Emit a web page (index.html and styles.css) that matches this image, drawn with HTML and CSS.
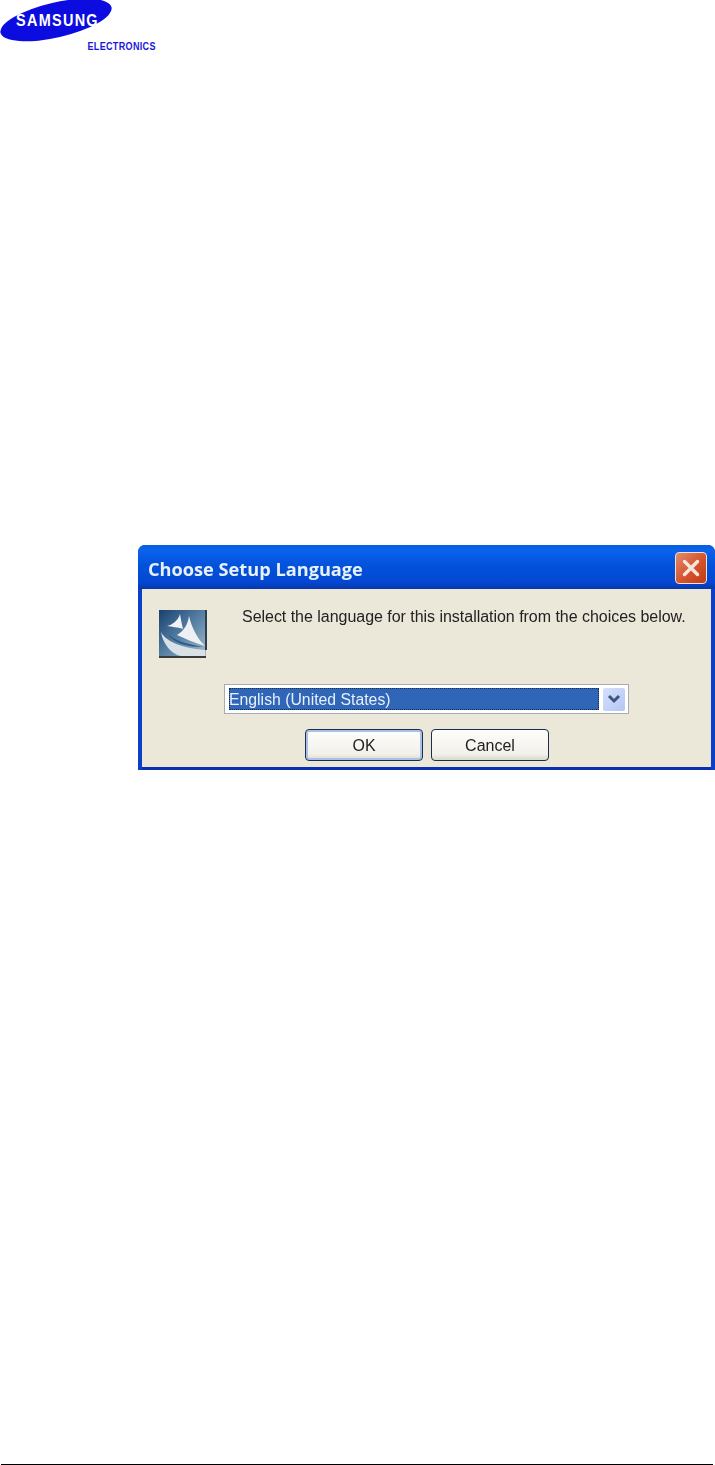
FILE: index.html
```html
<!DOCTYPE html>
<html lang="en">
<head>
    <meta charset="UTF-8">
    <meta name="viewport" content="width=device-width, initial-scale=1.0">
    <title>Choose Setup Language</title>
    <link rel="stylesheet" href="styles.css">
</head>
<body>
    <div class="page">
        <svg class="logo" width="160" height="52" viewBox="0 0 160 52">
            <ellipse cx="56" cy="20" rx="57" ry="17.5" fill="#0c0ce0" transform="rotate(-13 56 20)"/>
            <text class="logo-name" transform="translate(16 25.500) scale(.85 1)" textLength="96">SAMSUNG</text>
            <text class="logo-sub" transform="translate(87.500 49.500) scale(.86 1)" textLength="79">ELECTRONICS</text>
        </svg>

        <div class="dialog">
            <div class="titlebar">
                <span class="title">Choose Setup Language</span>
                <div class="close">
                    <svg width="20" height="20" viewBox="0 0 20 20">
                        <path d="M3.500 3.500 L16.500 16.500 M16.500 3.500 L3.500 16.500" stroke="#f4e6dc" stroke-width="3.500" stroke-linecap="round"/>
                    </svg>
                </div>
            </div>
            <div class="content">
                <div class="intro">
                    <svg class="setup-icon" width="49" height="49" viewBox="0 0 49 49">
                        <defs>
                            <linearGradient id="iconbg" x1="0" y1="0" x2="1" y2="1">
                                <stop offset="0" stop-color="#17406f"/>
                                <stop offset="0.55" stop-color="#5c86a8"/>
                                <stop offset="1" stop-color="#a9bccb"/>
                            </linearGradient>
                        </defs>
                        <rect width="47" height="47" fill="url(#iconbg)"/>
                        <rect y="46" width="47" height="2" fill="#3a3a3a"/>
                        <rect x="46" y="0" width="2" height="40" fill="#2c3e50"/>
                        <path d="M8 16 C13 15 19 11 21 4 C22 10 23 15 24 19 C18 17 13 17 8 16 Z" fill="#eef2f4"/>
                        <path d="M18 25 C25 21 29 14 30 6 C33 18 38 28 46 36 C36 33 27 29 18 25 Z" fill="#eef1f3"/>
                        <path d="M2 22 C6 30 20 38 46 40 L46 46 L22 46 C12 44 4 34 2 22 Z" fill="#d9e1e6"/>
                        <path d="M9 24 C15 30 27 34 44 37 C30 37 15 34 9 24 Z" fill="#2b5a86"/>
                    </svg>
                    <p class="message">Select the language for this installation from the choices below.</p>
                </div>
                <div class="select">
                    <div class="selected">English (United States)</div>
                    <div class="arrow">
                        <svg width="14" height="10" viewBox="0 0 14 10">
                            <path d="M2 2 L7 7 L12 2" fill="none" stroke="#3a5680" stroke-width="3"/>
                        </svg>
                    </div>
                </div>
                <div class="buttons">
                    <div class="btn btn-default">OK</div>
                    <div class="btn">Cancel</div>
                </div>
            </div>
        </div>

        <div class="footer-rule"></div>
    </div>
</body>
</html>
```

FILE: styles.css
```css
body {
    margin: 0;
    background-color: #fff;
    font-family: "Liberation Sans", Arial, sans-serif;
}
.page {
    height: 1465px;
    display: flex;
    flex-direction: column;
    overflow: hidden;
}
.logo {
    display: block;
    flex: none;
}
.logo-name {
    font-family: "Liberation Sans", Arial, sans-serif;
    font-size: 17px;
    font-weight: bold;
    fill: #fff;
}
.logo-sub {
    font-family: "Liberation Sans", Arial, sans-serif;
    font-size: 10.500px;
    font-weight: bold;
    fill: #1818d8;
}
.dialog {
    width: 577px;
    margin: 493px 0 0 138px;
    flex: none;
    border-radius: 7px 7px 0 0;
    background-color: #0a3fc8;
    filter: blur(0.4px);
}
.titlebar {
    height: 44px;
    padding: 7px 8px 5px 10px;
    box-sizing: border-box;
    display: flex;
    align-items: center;
    justify-content: space-between;
    border-radius: 7px 7px 0 0;
    background: linear-gradient(#0a5fe0 0, #0a62ec 12%, #0352dc 45%, #0347d2 85%, #0a36a8 100%);
}
.title {
    padding-top: 2px;
    font-family: "Open Sans", sans-serif;
    font-size: 18.200px;
    font-weight: bold;
    color: #e6f1f8;
}
.close {
    width: 32px;
    height: 32px;
    box-sizing: border-box;
    display: flex;
    align-items: center;
    justify-content: center;
    border: 1px solid #e8e4e0;
    border-radius: 4px;
    background: linear-gradient(135deg, #e48a6e, #d4532c 55%, #c23a18);
}
.content {
    margin: 0 4px 0 4px;
    border-bottom: 3px solid #0a2fb0;
    height: 181px;
    box-sizing: border-box;
    background-color: #ebe8da;
    padding: 21px 0 0 17px;
}
.intro {
    display: flex;
    align-items: flex-start;
}
.setup-icon {
    flex: none;
}
.message {
    margin: -4px 0 0 34px;
    font-size: 16px;
    letter-spacing: -0.03px;
    line-height: 22px;
    color: #222;
    white-space: nowrap;
}
.select {
    width: 405px;
    height: 30px;
    margin: 25px 0 0 65px;
    box-sizing: border-box;
    display: flex;
    align-items: center;
    padding: 3px 3px 3px 4px;
    border: 1px solid #a5acb2;
    background-color: #fff;
}
.selected {
    width: 370px;
    height: 100%;
    box-sizing: border-box;
    outline: 1px dotted #1b2a44;
    outline-offset: -1px;
    background-color: #2f66b8;
    color: #e8f0fa;
    font-size: 15.800px;
    line-height: 24px;
}
.arrow {
    width: 22px;
    height: 23px;
    margin-left: 4px;
    display: flex;
    align-items: center;
    justify-content: center;
    border-radius: 2px;
    background: linear-gradient(135deg, #d6e0fb, #b4c6f4);
}
.buttons {
    display: flex;
    gap: 8px;
    margin: 15px 0 0 146px;
}
.btn {
    width: 118px;
    height: 32px;
    box-sizing: border-box;
    border: 1px solid #1a2f4a;
    border-radius: 4px;
    background: linear-gradient(#fdfdfb, #f2f1ea 80%, #dcd8cc);
    color: #222;
    font-size: 16px;
    line-height: 32px;
    text-align: center;
}
.btn-default {
    box-shadow: inset 0 0 0 2px #a9c0e8;
}
.footer-rule {
    height: 1px;
    margin: auto 2px 0 1px;
    background-color: #000;
    flex: none;
}
```
